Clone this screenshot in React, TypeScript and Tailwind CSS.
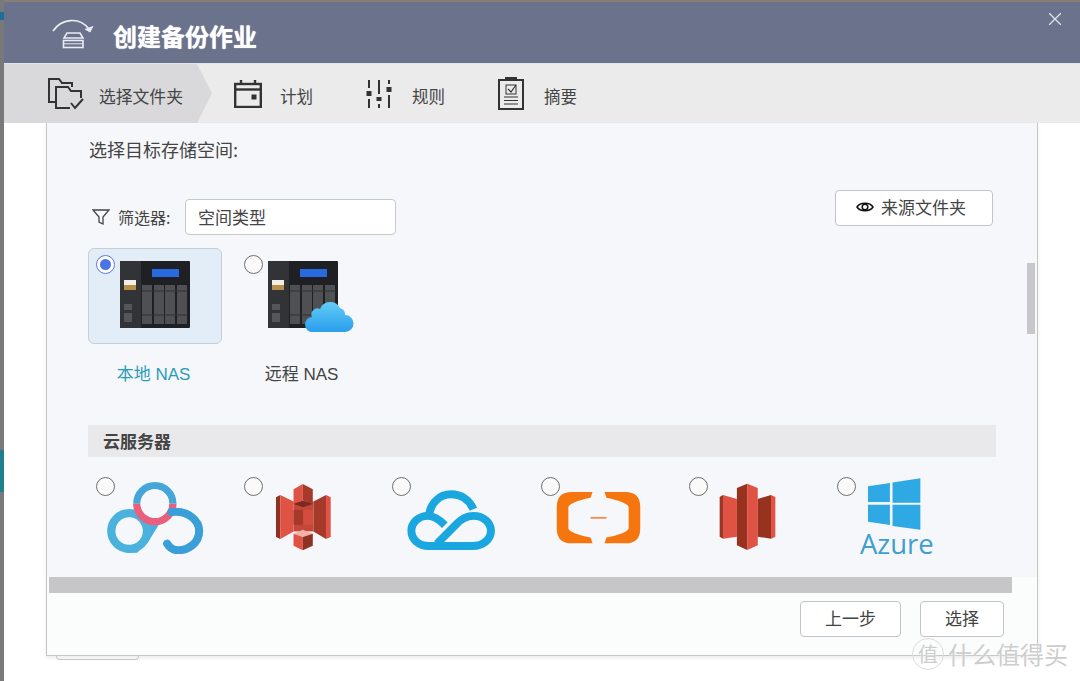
import type { ReactNode } from "react";

// dialog header icon: arc with arrow over a drive
const BackupIcon = () => (
	<svg width="42" height="32" viewBox="0 0 42 32" fill="none" stroke="#e8ecf4" strokeWidth="1.7">
		<path d="M1 14 C9 2 27 -1 37 12" />
		<path d="M41 9 L38 15 L33 12" fill="#e8ecf4" strokeWidth="1" />
		<path d="M12 21 L15 16 H28 L31 21 Z" strokeWidth="1.6" />
		<rect x="11.5" y="23.5" width="19.5" height="7" strokeWidth="1.6" />
		<path d="M11 26.8 H31" strokeWidth="1" />
	</svg>
);

const FolderCheckIcon = () => (
	<svg width="36" height="32" viewBox="0 0 36 32" fill="none" stroke="#333" strokeWidth="2">
		<path d="M7 24 H1 V1 H11 L14 5 H24 V9" />
		<path d="M22 30 H8 V9 H20 L23 13 H33 V20" />
		<path d="M23 25 L27 30 L35 21" />
	</svg>
);

const CalendarIcon = () => (
	<svg width="28" height="28" viewBox="0 0 28 28" fill="none" stroke="#333" strokeWidth="2.4">
		<rect x="1.2" y="4" width="25.6" height="23" />
		<path d="M1 9.5 H27" />
		<path d="M7 0 V4 M21 0 V4" />
		<rect x="18" y="15" width="4" height="4" fill="#333" strokeWidth="1" />
	</svg>
);

const SlidersIcon = () => (
	<svg width="26" height="28" viewBox="0 0 26 28" fill="none" stroke="#333" strokeWidth="2">
		<path d="M3 0 V8 M3 19 V28 M13 0 V14 M13 24 V28 M23 0 V4 M23 15 V28" />
		<rect x="0.5" y="11" width="5" height="5" fill="#333" stroke="none" />
		<rect x="10.5" y="17" width="5" height="4" fill="#333" stroke="none" />
		<rect x="20.5" y="7" width="5" height="5" fill="#333" stroke="none" />
	</svg>
);

const ClipboardIcon = () => (
	<svg width="26" height="33" viewBox="0 0 26 33" fill="none" stroke="#333" strokeWidth="2">
		<rect x="1" y="3" width="24" height="29" />
		<path d="M7 1 H19" />
		<rect x="8" y="8" width="10" height="9" strokeWidth="1" />
		<path d="M10 12 L13 15 L18 8" strokeWidth="1.2" />
		<path d="M6 20 H20 M6 23.5 H20 M6 27 H20" strokeWidth="1.2" />
	</svg>
);

const FunnelIcon = () => (
	<svg width="18" height="17" viewBox="0 0 18 17" fill="none" stroke="#444" strokeWidth="1.3">
		<path d="M1 1 H17 L11 8 V15 L7 13 V8 Z" />
	</svg>
);

const EyeIcon = () => (
	<svg width="18" height="12" viewBox="0 0 18 12" fill="none" stroke="#111" strokeWidth="1.5">
		<path d="M1 6 C4 1 14 1 17 6 C14 11 4 11 1 6 Z" />
		<circle cx="9" cy="6" r="2.8" />
	</svg>
);

// NAS box, with the blue cloud on top for the remote one
const NasIcon = ({ cloud }: { cloud?: boolean }) => (
	<svg width="87" height="72" viewBox="0 0 87 72">
		<defs>
			<linearGradient id="cloudFill" x1="0" y1="0" x2="0" y2="1">
				<stop offset="0" stopColor="#62cdf6" />
				<stop offset="1" stopColor="#2a9dec" />
			</linearGradient>
		</defs>
		<rect x="0" y="0" width="70" height="67" rx="1" fill="#1f2024" />
		<rect x="0" y="0" width="21" height="67" fill="#323336" />
		<rect x="32" y="8" width="27" height="8" fill="#2a6ae0" />
		<rect x="4" y="19" width="12" height="5" fill="#f2efe6" />
		<rect x="4" y="24" width="12" height="5" fill="#b98f4c" />
		<rect x="4" y="43" width="8" height="6" fill="#55565a" />
		<rect x="4" y="52" width="8" height="9" fill="#55565a" />
		<rect x="22" y="24" width="10" height="39" fill="#4f5053" />
		<rect x="34" y="24" width="10" height="39" fill="#4f5053" />
		<rect x="45" y="24" width="10" height="39" fill="#4f5053" />
		<rect x="57" y="24" width="10" height="39" fill="#4f5053" />
		<path d="M22 30 H67 M22 54 H67" stroke="#2f3033" strokeWidth="1" />
		{cloud && (
			<path
				d="M45 71 a7.5 7.5 0 0 1 -1 -15 a6 6 0 0 1 8 -8 a11 11 0 0 1 20 -1 a7 7 0 0 1 5 7 a8.5 8.5 0 0 1 0 17 Z"
				fill="url(#cloudFill)"
			/>
		)}
	</svg>
);

const BaiduLogo = () => (
	<svg width="97" height="72" viewBox="82 65 290 216" fill="none" className="ml-[-8px] mt-[5px]">
		<path d="M171 130 A54 54 0 0 1 279 130" stroke="#45a7d9" strokeWidth="22" />
		<path d="M160 147 L200 165 L245 180 L205 245 L172 277 L140 277 Z" fill="#4aaedc" />
		<circle cx="148" cy="212" r="53" stroke="#4bb2de" strokeWidth="26" />
		<circle cx="148" cy="212" r="41" fill="#f6f7fa" />
		<path d="M171 130 A54 54 0 0 0 279 130" stroke="#ea5f7d" strokeWidth="22" />
		<circle cx="225" cy="130" r="43" fill="#f6f7fa" />
		<path
			d="M275 155 C325 150 358 180 358 212 C358 248 325 270 295 270 C280 270 270 262 262 250"
			stroke="#3a9fd8"
			strokeWidth="24"
			strokeLinecap="round"
		/>
	</svg>
);

const S3Logo = () => (
	<svg width="57" height="67" viewBox="585 72 170 202" className="ml-[12px] mt-[7px]">
		<rect x="640" y="125" width="60" height="90" fill="#c4483a" />
		<polygon points="587,112 600,105 600,238 587,232" fill="#8c3323" />
		<polygon points="600,105 640,125 640,215 600,238" fill="#e05243" />
		<polygon points="700,125 738,105 738,238 700,215" fill="#a53a2a" />
		<polygon points="738,105 752,112 752,232 738,238" fill="#e05243" />
		<polygon points="640,88 668,72 668,122 640,132" fill="#e05243" />
		<polygon points="668,72 698,88 698,132 668,122" fill="#a53a2a" />
		<polygon points="640,132 668,122 698,132 668,142" fill="#7b2a1d" />
		<rect x="640" y="150" width="29" height="45" fill="#a53a2a" />
		<rect x="669" y="150" width="29" height="45" fill="#d34c3e" />
		<polygon points="640,222 668,210 698,222 668,232" fill="#f2b1a6" />
		<polygon points="640,222 668,232 668,272 640,258" fill="#e05243" />
		<polygon points="668,232 698,222 698,258 668,272" fill="#8c3323" />
	</svg>
);

const TencentLogo = () => (
	<svg width="89" height="61" viewBox="82 90 268 184" fill="none" stroke="#1aa7e0" strokeWidth="24" className="ml-[-4px] mt-[13px]">
		<path d="M148 172 C150 130 180 103 215 103 C245 103 270 120 282 148" />
		<path d="M196 196 C175 175 160 168 145 168 C115 168 95 190 95 213 C95 240 118 259 148 259 H280 C312 259 335 238 335 213 C335 188 312 168 282 168 C262 168 245 178 232 192 L172 252" />
	</svg>
);

const AliyunLogo = () => (
	<svg width="85" height="53" viewBox="528 92 256 160" className="ml-[-4px] mt-[14px]">
		<path fill="#f5750f" d="M638 95 H575 Q530 95 530 140 V205 Q530 250 575 250 H638 L632 232 Q570 220 565 205 V140 Q570 125 632 112 Z" />
		<path fill="#f5750f" d="M674 95 H737 Q782 95 782 140 V205 Q782 250 737 250 H674 L680 232 Q742 220 747 205 V140 Q742 125 680 112 Z" />
		<rect x="632" y="170" width="48" height="6" fill="#e9965a" />
	</svg>
);

const GlacierLogo = () => (
	<svg width="57" height="68" viewBox="118 70 172 205" className="ml-[11px] mt-[6px]">
		<polygon points="120,112 130,106 130,238 120,232" fill="#9b3526" />
		<polygon points="130,106 172,118 172,232 130,238" fill="#e05243" />
		<polygon points="172,85 203,72 203,272 172,258" fill="#97321f" />
		<polygon points="203,72 235,85 235,258 203,272" fill="#e05243" />
		<polygon points="235,118 275,106 275,238 235,232" fill="#97321f" />
		<polygon points="275,106 288,112 288,232 275,238" fill="#e05243" />
	</svg>
);

const AzureLogo = () => (
	<div className="ml-[4px] flex flex-col items-center">
		<svg width="55" height="54" viewBox="560 55 168 162" fill="#2fa9e4" className="ml-[-5px]">
			<polygon points="563,82 630,72 630,130 563,130" />
			<polygon points="638,70 723,57 723,132 638,132" />
			<polygon points="563,138 630,138 630,200 563,190" />
			<polygon points="638,138 723,138 723,215 638,203" />
		</svg>
		<span className="font-['Open_Sans',sans-serif] text-[27.5px] leading-[25px] text-[#3f9fd0]">Azure</span>
	</div>
);

const Radio = ({ checked }: { checked?: boolean }) => (
	<span
		className={
			checked
				? "flex h-[19px] w-[19px] shrink-0 items-center justify-center rounded-full border border-[#5f79d8] bg-white"
				: "flex h-[19px] w-[19px] shrink-0 rounded-full border border-[#6e6e6e] bg-[#fafafa]"
		}
	>
		{checked && <span className="h-[11px] w-[11px] rounded-full bg-[#4a74e6]" />}
	</span>
);

const Button = ({ className, children }: { className: string; children: ReactNode }) => (
	<div className={`flex h-9 items-center justify-center gap-[7px] rounded border border-[#c4c4c6] bg-white pb-[2px] text-[17px] text-[#444] ${className}`}>
		{children}
	</div>
);

const steps = [
	{ label: "计划", icon: <CalendarIcon />, width: "w-[132px]", gap: "gap-[18px]" },
	{ label: "规则", icon: <SlidersIcon />, width: "w-[132px]", gap: "gap-[20px]" },
	{ label: "摘要", icon: <ClipboardIcon />, width: "w-[100px]", gap: "gap-[20px]" },
];

const clouds = [
	<BaiduLogo key="baidu" />,
	<S3Logo key="s3" />,
	<TencentLogo key="tencent" />,
	<AliyunLogo key="aliyun" />,
	<GlacierLogo key="glacier" />,
	<AzureLogo key="azure" />,
];

export default function App() {
	return (
		<div className="relative flex h-[681px] w-[1080px] overflow-hidden bg-white font-['Noto_Sans_CJK_SC','Noto_Sans',sans-serif] text-[#444]">
			{/* sliver of the window behind */}
			<div className="flex w-1 shrink-0 flex-col bg-[#77797a]">
				<div className="mt-[12px] h-2 bg-[#1f6f9c]" />
				<div className="mt-[430px] h-[42px] bg-[#1f7f8c]" />
			</div>

			<div className="flex min-w-0 flex-1 flex-col">
				<div className="h-[2px] bg-[#8b7c74]" />

				{/* title bar */}
				<header className="relative flex h-[61px] items-center bg-[#6b738c] pl-[48px]">
					<BackupIcon />
					<h1 className="ml-[19px] mt-[6px] text-2xl font-bold text-white [text-shadow:0_0_1px_white]">创建备份作业</h1>
					<svg width="12" height="12" viewBox="0 0 12 12" stroke="#dfe3ec" strokeWidth="1.3" className="absolute right-[19px] top-[11px]">
						<path d="M0 0 L12 12 M12 0 L0 12" />
					</svg>
				</header>
				<div className="h-px bg-[#dfe4ee]" />

				{/* steps */}
				<nav className="flex h-[59px] items-center bg-[#ebebec]">
					<div className="flex h-full w-[208px] items-center gap-[15px] bg-[#d9d9dc] pl-[44px] [clip-path:polygon(0_0,193px_0,100%_50%,193px_100%,0_100%)]">
						<FolderCheckIcon />
						<span className="mt-[6px] text-[16.8px] whitespace-nowrap">选择文件夹</span>
					</div>
					<div className="ml-[22px] flex">
						{steps.map((step) => (
							<div key={step.label} className={`flex items-center ${step.width} ${step.gap}`}>
								{step.icon}
								<span className="mt-[6px] text-[16.5px]">{step.label}</span>
							</div>
						))}
					</div>
				</nav>

				{/* wizard panel */}
				<main className="ml-[42px] flex h-[533px] w-[992px] flex-col border-x border-b border-[#c6c6c8] shadow-[0_2px_4px_rgba(0,0,0,0.08)]">
					<section className="relative h-[454px] bg-[#f6f7fa] pl-[41px] pr-[44px] pt-[14px]">
						<h2 className="ml-px h-6 text-lg leading-6">选择目标存储空间:</h2>

						<div className="mt-[38px] flex h-9 items-center justify-between">
							<div className="ml-[4px] flex items-center">
								<FunnelIcon />
								<span className="ml-2 w-[67px] text-base">筛选器:</span>
								<div className="flex h-9 w-[211px] items-center rounded border border-[#c9c9cb] bg-white pl-3 text-[17px]">空间类型</div>
							</div>
							<Button className="mt-[-18px] w-[158px] pr-[6px]">
								<EyeIcon />
								<span>来源文件夹</span>
							</Button>
						</div>

						<div className="mt-[13px] flex">
							<div className="w-[148px]">
								<div className="flex h-24 w-[134px] gap-[5px] rounded-md border border-[#c3d0dc] bg-[#e3edf8] pl-[7px] pt-[6px]">
									<Radio checked />
									<div className="pt-[6px]">
										<NasIcon />
									</div>
								</div>
								<div className="mt-[19px] w-[131px] text-center font-['Liberation_Sans','Noto_Sans_CJK_SC',sans-serif] text-[17px] leading-6 text-[#2a9cb8]">本地 NAS</div>
							</div>
							<div className="w-[148px]">
								<div className="flex h-24 gap-[5px] pl-[8px] pt-[7px]">
									<Radio />
									<div className="pt-[6px]">
										<NasIcon cloud />
									</div>
								</div>
								<div className="mt-[19px] w-[131px] text-center font-['Liberation_Sans','Noto_Sans_CJK_SC',sans-serif] text-[17px] leading-6">远程 NAS</div>
							</div>
						</div>

						<div className="mt-[38px] flex h-8 w-[908px] items-center bg-[#e9e9eb] pl-[15px] text-[17px] font-bold">云服务器</div>

						<div className="mt-5 flex">
							{clouds.map((logo, i) => (
								<div key={i} className="flex w-[148.2px] pl-[8px]">
									<Radio />
									{logo}
								</div>
							))}
						</div>

						{/* vertical scrollbar thumb */}
						<div className="absolute right-[2px] top-[140px] h-[71px] w-2 bg-[#c8c8ca]" />
					</section>

					<div className="flex flex-1 flex-col bg-[#fbfcfc]">
						<div className="ml-[2px] h-4 w-[963px] bg-[#c6c6c8]" />
						<div className="flex justify-end gap-[19px] pr-[33px] pt-2">
							<Button className="w-[101px]">上一步</Button>
							<Button className="w-[84px]">选择</Button>
						</div>
					</div>
				</main>
				<div className="ml-[52px] h-1 w-[83px] rounded-b border-x border-b border-[#c6c6c8]" />
			</div>

			{/* watermark */}
			<div className="absolute left-[912px] top-[638px] flex items-center text-[#cdcdcd] [text-shadow:0_0_2px_white]">
				<span className="flex h-[32px] w-[32px] items-center justify-center rounded-full border border-[#dcdcdc] text-xl">值</span>
				<span className="ml-[4px] text-2xl leading-[28px] whitespace-nowrap">什么值得买</span>
			</div>
		</div>
	);
}
